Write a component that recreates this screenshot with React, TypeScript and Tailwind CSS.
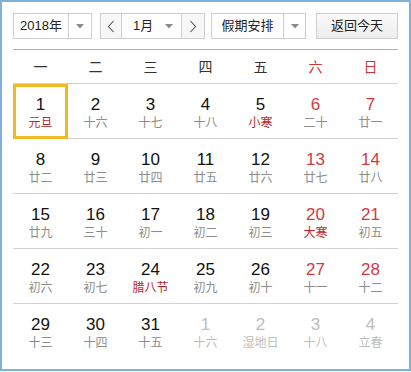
import React from "react";

type Day = { d: number; l: string; hol?: boolean; other?: boolean };

const rows: Day[][] = [
  [
    { d: 1, l: "元旦", hol: true },
    { d: 2, l: "十六" },
    { d: 3, l: "十七" },
    { d: 4, l: "十八" },
    { d: 5, l: "小寒", hol: true },
    { d: 6, l: "二十" },
    { d: 7, l: "廿一" },
  ],
  [
    { d: 8, l: "廿二" },
    { d: 9, l: "廿三" },
    { d: 10, l: "廿四" },
    { d: 11, l: "廿五" },
    { d: 12, l: "廿六" },
    { d: 13, l: "廿七" },
    { d: 14, l: "廿八" },
  ],
  [
    { d: 15, l: "廿九" },
    { d: 16, l: "三十" },
    { d: 17, l: "初一" },
    { d: 18, l: "初二" },
    { d: 19, l: "初三" },
    { d: 20, l: "大寒", hol: true },
    { d: 21, l: "初五" },
  ],
  [
    { d: 22, l: "初六" },
    { d: 23, l: "初七" },
    { d: 24, l: "腊八节", hol: true },
    { d: 25, l: "初九" },
    { d: 26, l: "初十" },
    { d: 27, l: "十一" },
    { d: 28, l: "十二" },
  ],
  [
    { d: 29, l: "十三" },
    { d: 30, l: "十四" },
    { d: 31, l: "十五" },
    { d: 1, l: "十六", other: true },
    { d: 2, l: "湿地日", other: true },
    { d: 3, l: "十八", other: true },
    { d: 4, l: "立春", other: true },
  ],
];

const weekdays = ["一", "二", "三", "四", "五", "六", "日"];

const Caret = () => (
  <svg width="8" height="5" viewBox="0 0 8 5">
    <path d="M0 0h8L4 4.5z" fill="#8a8a8a" />
  </svg>
);

const Chevron = ({ dir }: { dir: "l" | "r" }) => (
  <svg width="8" height="13" viewBox="0 0 8 13">
    <polyline
      points={dir === "l" ? "6.5,1 1.5,6.5 6.5,12" : "1.5,1 6.5,6.5 1.5,12"}
      fill="none"
      stroke="#555"
      strokeWidth="1.1"
    />
  </svg>
);

export default function App() {
  return (
    <div
      className="w-[411px] h-[371px] border-2 border-[#7fb1db] bg-white px-[11px] pt-[11px] text-[#222]"
      style={{ fontFamily: '"Liberation Sans", "Noto Sans CJK SC", sans-serif' }}
    >
      {/* 工具栏 */}
      <div className="flex h-[26px] items-stretch text-[13px]">
        <div className="flex w-[79px] border border-[#cfcfcf] bg-white">
          <div className="flex w-[55px] items-center justify-center border-r border-[#cfcfcf]">2018年</div>
          <div className="flex flex-1 items-center justify-center">
            <Caret />
          </div>
        </div>

        <div className="ml-[8px] flex w-[105px] border border-[#cfcfcf] bg-white">
          <div className="flex w-[21px] items-center justify-center border-r border-[#cfcfcf] bg-[#f7f7f7]">
            <Chevron dir="l" />
          </div>
          <div className="flex w-[60px] items-center border-r border-[#cfcfcf] pl-[11px]">
            <span>1月</span>
            <span className="ml-auto mr-[8px] flex">
              <Caret />
            </span>
          </div>
          <div className="flex flex-1 items-center justify-center bg-[#f7f7f7]">
            <Chevron dir="r" />
          </div>
        </div>

        <div className="ml-[6px] flex w-[95px] border border-[#cfcfcf] bg-white">
          <div className="flex w-[72px] items-center justify-center border-r border-[#cfcfcf]">假期安排</div>
          <div className="flex flex-1 items-center justify-center">
            <Caret />
          </div>
        </div>

        <button className="ml-auto flex w-[82px] items-center justify-center border border-[#cfcfcf] bg-gradient-to-b from-[#fafafa] to-[#ededed] text-[13px]">
          返回今天
        </button>
      </div>

      <div className="mt-[10px] h-px bg-[#8cbbe0]" />

      {/* 星期 */}
      <div className="grid h-[34px] grid-cols-7 border-b border-[#d2d2d2] text-[14px]">
        {weekdays.map((w, i) => (
          <div
            key={w}
            className={`flex items-center justify-center pt-[2px] ${i >= 5 ? "text-[#c8363a]" : "text-[#333]"}`}
          >
            {w}
          </div>
        ))}
      </div>

      {/* 日期 */}
      {rows.map((row, ri) => (
        <div
          key={ri}
          className={`grid h-[55px] grid-cols-7 ${ri < rows.length - 1 ? "border-b border-[#d2d2d2]" : ""}`}
        >
          {row.map((c, ci) => {
            const weekend = ci >= 5;
            const numColor = c.other ? "text-[#bdbdbd]" : weekend ? "text-[#d23a3f]" : "text-[#111]";
            const lunarColor = c.other ? "text-[#bdbdbd]" : c.hol ? "text-[#b8262b]" : "text-[#8c8c8c]";
            const selected = ri === 0 && ci === 0;
            return (
              <div key={ci} className="relative flex flex-col items-center pt-[11px]">
                {selected && (
                  <div className="absolute inset-x-0 top-0 bottom-[-1px] border-[3px] border-[#f4b823]" />
                )}
                <span className={`text-[17px] leading-[20px] ${numColor}`}>{c.d}</span>
                <span className={`text-[12px] leading-[16px] ${lunarColor}`}>{c.l}</span>
              </div>
            );
          })}
        </div>
      ))}
    </div>
  );
}
